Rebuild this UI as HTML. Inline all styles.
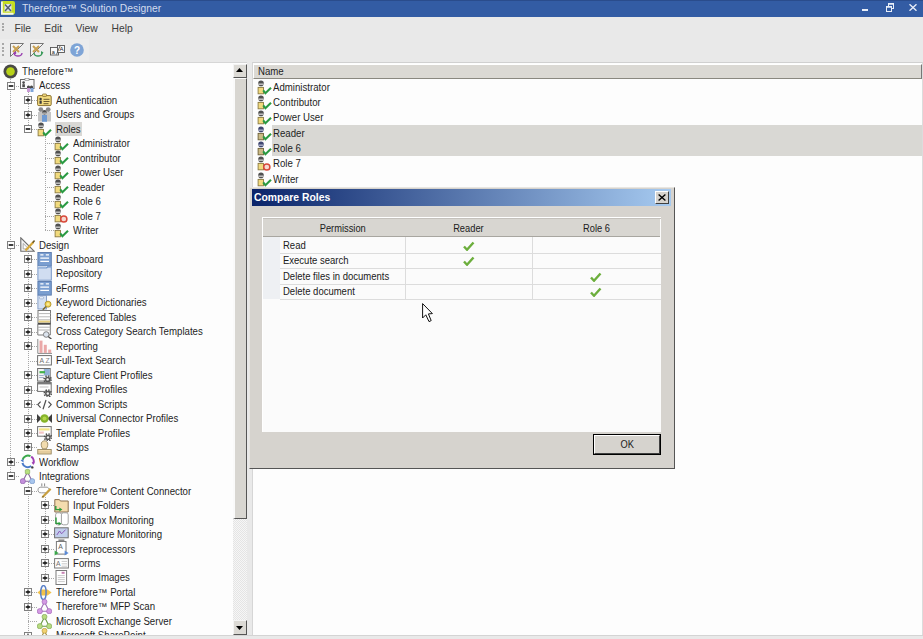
<!DOCTYPE html><html><head><meta charset="utf-8"><style>
*{margin:0;padding:0;box-sizing:border-box}
html,body{width:923px;height:639px;overflow:hidden;background:#e9e9e9;font-family:"Liberation Sans", sans-serif;color:#1e1e1e;position:relative}
.a{position:absolute}
#title{left:0;top:0;width:923px;height:17px;background:#335ca4;border-top:1px solid #2a4c8c}
#title .t{left:22px;top:1.5px;font-size:10.3px;line-height:12px;color:#d4ddef;white-space:nowrap}
#menu{left:0;top:17px;width:923px;height:20px;background:#e9e9e9}
#menu span{position:absolute;top:5.5px;font-size:10.3px;line-height:12px;color:#3c3c3c}
.grip{position:absolute;left:2px;width:2px;height:2px;background:#a8a8a8}
#tree{left:0;top:62px;width:247px;height:573px;background:#fdfdfd;overflow:hidden;border-top:1px solid #d6d6d6}
#treein{position:absolute;left:0;top:-63px;width:233px;height:700px;overflow:hidden}
.tx{position:absolute;height:14px;font-size:10px;white-space:nowrap;color:#1e1e1e;line-height:14px;transform:scaleX(0.965);transform-origin:0 50%}
.hsel{position:absolute;background:#d9d8d5}
.vl{position:absolute;width:1px;background:repeating-linear-gradient(to bottom,#a8a8a8 0 1px,transparent 1px 2px)}
.hl{position:absolute;height:1px;background:repeating-linear-gradient(to right,#a8a8a8 0 1px,transparent 1px 2px)}
.exp{position:absolute;width:8px;height:8px;border:1px solid #808080;background:#fdfdfd}
.exp .mh{position:absolute;left:1px;top:2px;width:4px;height:2px;background:#4a4a4a}
.exp .mv{position:absolute;left:2px;top:1px;width:2px;height:4px;background:#4a4a4a}
#vs{left:233px;top:64px;width:14px;height:571px;background:#e4e3df}
#list{left:252px;top:62px;width:671px;height:573px;background:#fdfdfd;border-top:1px solid #d0d0d0;border-left:1px solid #d6d6d6;border-right:1px solid #dcdcdc}
#lhdr{left:253px;top:64px;width:669px;height:15px;background:#dbd9d4;border-bottom:1px solid #8a8880;border-right:1px solid #777;border-top:1px solid #fff;border-left:1px solid #fff}
.dx{position:absolute;font-size:10px;line-height:12px;white-space:nowrap;color:#202020;transform:scaleX(0.95);transform-origin:0 50%}
.dc{position:absolute;font-size:10px;line-height:12px;white-space:nowrap;color:#202020;text-align:center}
.dc span{display:inline-block;transform:scaleX(0.93)}
.lsel{position:absolute;left:272px;width:650px;background:#d9d8d4}
#dlg{left:249px;top:187px;width:426px;height:282px;background:#d6d3ce;border-top:1px solid #e8e6e2;border-left:1px solid #e8e6e2;border-right:1px solid #555;border-bottom:1px solid #555}
</style></head><body>
<div id="title" class="a"><div class="t a">Therefore™ Solution Designer</div></div>
<svg class="a" style="left:1px;top:1px" width="14" height="14" viewBox="0 0 14 14"><rect x="0" y="0" width="14" height="13.5" rx="2" fill="#c6de22"/><path d="M0.8 0.5 V12.8 H12.5" fill="none" stroke="#f6f8e8" stroke-width="2"/><rect x="3.5" y="3" width="7" height="7.5" fill="#dfe6f0"/><path d="M4 3.5 L10 10 M10 3.5 L4 10" stroke="#556070" stroke-width="1.5"/></svg>
<div class="a" style="left:862px;top:9px;width:6px;height:2px;background:#e8eef8"></div>
<svg class="a" style="left:886px;top:3px" width="8" height="9" viewBox="0 0 8 9"><rect x="2.5" y="0.5" width="5" height="5" fill="none" stroke="#e8eef8" stroke-width="1"/><rect x="0.5" y="3.5" width="5" height="5" fill="#335ca4" stroke="#e8eef8" stroke-width="1"/><path d="M0.5 4h5M2.5 1h5" stroke="#e8eef8" stroke-width="1.4"/></svg>
<svg class="a" style="left:909px;top:4px" width="8" height="7" viewBox="0 0 8 7"><path d="M0.5 0.3 L7.5 6.7 M7.5 0.3 L0.5 6.7" stroke="#e8eef8" stroke-width="1.4"/></svg>
<div class="a" style="left:0;top:17px;width:923px;height:1px;background:#f2f5fa"></div>
<div id="menu" class="a"><span style="left:14.5px">File</span><span style="left:44.3px">Edit</span><span style="left:75.5px">View</span><span style="left:111.5px">Help</span></div>
<div class="grip" style="top:22.5px"></div>
<div class="grip" style="top:25.5px"></div>
<div class="grip" style="top:28.5px"></div>
<div class="a" style="left:0;top:39px;width:89px;height:22px;background:#ececec"></div>
<div class="grip" style="top:43px"></div>
<div class="grip" style="top:46.5px"></div>
<div class="grip" style="top:50px"></div>
<div class="grip" style="top:53.5px"></div>
<svg class="a" style="left:10px;top:43px" width="14" height="14" viewBox="0 0 14 14"><path d="M0.5 0.5 H13.5 L0.5 13.5 Z" fill="#f4f4f4" stroke="#777" stroke-width="1"/><path d="M3 3 L9 9 M9 3 L3 9" stroke="#c8a050" stroke-width="2"/><path d="M4 10 A4 3 0 0 0 12 10" fill="none" stroke="#9a40b0" stroke-width="1.4"/><circle cx="5" cy="10" r="1.3" fill="#9a40b0"/></svg>
<svg class="a" style="left:30px;top:43px" width="14" height="14" viewBox="0 0 14 14"><path d="M0.5 0.5 H13.5 L0.5 13.5 Z" fill="#f4f4f4" stroke="#777" stroke-width="1"/><path d="M3 3 L9 9 M9 3 L3 9" stroke="#c8a050" stroke-width="2"/><path d="M4 10 A4 3 0 0 0 12 10" fill="none" stroke="#3a9a5a" stroke-width="1.4"/><path d="M11 8 L13.5 9.5 L11 12 Z" fill="#3a9a5a"/></svg>
<svg class="a" style="left:50px;top:45px" width="15" height="11" viewBox="0 0 15 11"><rect x="0.5" y="2.5" width="8" height="7.5" fill="#fafafa" stroke="#555" stroke-width="0.9"/><rect x="7.5" y="0.5" width="7" height="7" fill="#fafafa" stroke="#555" stroke-width="0.9"/><path d="M6.5 9.5 L10 1" stroke="#555" stroke-width="0.9"/><text x="1.8" y="8.8" font-size="5.5" fill="#222" font-family="Liberation Sans">a</text><text x="9.6" y="6.4" font-size="6" fill="#222" font-family="Liberation Sans">A</text></svg>
<svg class="a" style="left:70px;top:43px" width="14" height="14" viewBox="0 0 14 14"><circle cx="7" cy="7" r="6.8" fill="#7ea4d6"/><text x="7" y="11" text-anchor="middle" font-size="10" font-weight="bold" fill="#fff" font-family="Liberation Sans">?</text></svg>
<div id="tree" class="a"><div id="treein"><div class="vl" style="left:10px;top:77px;height:9px"></div>
<div class="hl" style="left:10px;top:86px;width:10px"></div>
<div class="vl" style="left:28px;top:92px;height:8px"></div>
<div class="hl" style="left:28px;top:100px;width:9px"></div>
<div class="vl" style="left:28px;top:92px;height:23px"></div>
<div class="hl" style="left:28px;top:115px;width:9px"></div>
<div class="vl" style="left:28px;top:92px;height:37px"></div>
<div class="hl" style="left:28px;top:129px;width:9px"></div>
<div class="vl" style="left:45px;top:135px;height:8px"></div>
<div class="hl" style="left:45px;top:143px;width:9px"></div>
<div class="vl" style="left:45px;top:135px;height:23px"></div>
<div class="hl" style="left:45px;top:158px;width:9px"></div>
<div class="vl" style="left:45px;top:135px;height:37px"></div>
<div class="hl" style="left:45px;top:172px;width:9px"></div>
<div class="vl" style="left:45px;top:135px;height:52px"></div>
<div class="hl" style="left:45px;top:187px;width:9px"></div>
<div class="vl" style="left:45px;top:135px;height:66px"></div>
<div class="hl" style="left:45px;top:201px;width:9px"></div>
<div class="vl" style="left:45px;top:135px;height:81px"></div>
<div class="hl" style="left:45px;top:216px;width:9px"></div>
<div class="vl" style="left:45px;top:135px;height:95px"></div>
<div class="hl" style="left:45px;top:230px;width:9px"></div>
<div class="vl" style="left:10px;top:77px;height:168px"></div>
<div class="hl" style="left:10px;top:245px;width:10px"></div>
<div class="vl" style="left:28px;top:251px;height:8px"></div>
<div class="hl" style="left:28px;top:259px;width:9px"></div>
<div class="vl" style="left:28px;top:251px;height:23px"></div>
<div class="hl" style="left:28px;top:274px;width:9px"></div>
<div class="vl" style="left:28px;top:251px;height:37px"></div>
<div class="hl" style="left:28px;top:288px;width:9px"></div>
<div class="vl" style="left:28px;top:251px;height:52px"></div>
<div class="hl" style="left:28px;top:303px;width:9px"></div>
<div class="vl" style="left:28px;top:251px;height:66px"></div>
<div class="hl" style="left:28px;top:317px;width:9px"></div>
<div class="vl" style="left:28px;top:251px;height:81px"></div>
<div class="hl" style="left:28px;top:332px;width:9px"></div>
<div class="vl" style="left:28px;top:251px;height:95px"></div>
<div class="hl" style="left:28px;top:346px;width:9px"></div>
<div class="vl" style="left:28px;top:251px;height:110px"></div>
<div class="hl" style="left:28px;top:361px;width:9px"></div>
<div class="vl" style="left:28px;top:251px;height:124px"></div>
<div class="hl" style="left:28px;top:375px;width:9px"></div>
<div class="vl" style="left:28px;top:251px;height:139px"></div>
<div class="hl" style="left:28px;top:390px;width:9px"></div>
<div class="vl" style="left:28px;top:251px;height:153px"></div>
<div class="hl" style="left:28px;top:404px;width:9px"></div>
<div class="vl" style="left:28px;top:251px;height:168px"></div>
<div class="hl" style="left:28px;top:419px;width:9px"></div>
<div class="vl" style="left:28px;top:251px;height:182px"></div>
<div class="hl" style="left:28px;top:433px;width:9px"></div>
<div class="vl" style="left:28px;top:251px;height:196px"></div>
<div class="hl" style="left:28px;top:447px;width:9px"></div>
<div class="vl" style="left:10px;top:77px;height:385px"></div>
<div class="hl" style="left:10px;top:462px;width:10px"></div>
<div class="vl" style="left:10px;top:77px;height:399px"></div>
<div class="hl" style="left:10px;top:476px;width:10px"></div>
<div class="vl" style="left:28px;top:482px;height:9px"></div>
<div class="hl" style="left:28px;top:491px;width:9px"></div>
<div class="vl" style="left:45px;top:497px;height:8px"></div>
<div class="hl" style="left:45px;top:505px;width:9px"></div>
<div class="vl" style="left:45px;top:497px;height:23px"></div>
<div class="hl" style="left:45px;top:520px;width:9px"></div>
<div class="vl" style="left:45px;top:497px;height:37px"></div>
<div class="hl" style="left:45px;top:534px;width:9px"></div>
<div class="vl" style="left:45px;top:497px;height:52px"></div>
<div class="hl" style="left:45px;top:549px;width:9px"></div>
<div class="vl" style="left:45px;top:497px;height:66px"></div>
<div class="hl" style="left:45px;top:563px;width:9px"></div>
<div class="vl" style="left:45px;top:497px;height:81px"></div>
<div class="hl" style="left:45px;top:578px;width:9px"></div>
<div class="vl" style="left:28px;top:482px;height:110px"></div>
<div class="hl" style="left:28px;top:592px;width:9px"></div>
<div class="vl" style="left:28px;top:482px;height:125px"></div>
<div class="hl" style="left:28px;top:607px;width:9px"></div>
<div class="vl" style="left:28px;top:482px;height:139px"></div>
<div class="hl" style="left:28px;top:621px;width:9px"></div>
<div class="vl" style="left:28px;top:482px;height:154px"></div>
<div class="hl" style="left:28px;top:636px;width:9px"></div>
<svg class="a" style="left:3px;top:63.6px" width="15" height="15" viewBox="0 0 15 15"><circle cx="7.5" cy="7.5" r="7" fill="#4a4a46"/><circle cx="7.5" cy="7.5" r="4.3" fill="#b8d218"/></svg>
<div class="tx" style="left:22px;top:64.80px">Therefore™</div>
<div class="exp" style="left:7px;top:82px"><svg style="position:absolute;left:0;top:0" width="6" height="6" viewBox="0 0 6 6"><rect x="0.7" y="2.2" width="4.6" height="1.6" fill="#111"/></svg></div>
<svg class="a" style="left:20px;top:78.08px" width="15" height="15" viewBox="0 0 15 15"><rect x="0.5" y="1.5" width="13.5" height="9" fill="#fafafa" stroke="#6a6a6a" stroke-width="1"/><rect x="5" y="0.3" width="4" height="2" fill="#fff" stroke="#888" stroke-width="0.7"/><circle cx="3.6" cy="4.6" r="1.3" fill="#4a4a4a"/><rect x="2.3" y="6.2" width="2.6" height="3" fill="#4a4a4a"/><path d="M7 8.5 q1.5 -2 3 0 q1.5 -2 3 0 v1.5 h-6z" fill="#4a4a4a"/><rect x="7" y="10" width="3" height="4" fill="#c89ad4"/><rect x="10.5" y="10" width="3" height="4" fill="#7fa6da"/></svg>
<div class="tx" style="left:39px;top:79.28px">Access</div>
<div class="exp" style="left:24px;top:96px"><svg style="position:absolute;left:0;top:0" width="6" height="6" viewBox="0 0 6 6"><rect x="2.25" y="0.6" width="1.5" height="4.8" fill="#555"/><rect x="0.7" y="2.2" width="4.6" height="1.6" fill="#111"/></svg></div>
<svg class="a" style="left:37px;top:92.55px" width="15" height="15" viewBox="0 0 15 15"><rect x="0.6" y="2.6" width="13.6" height="10" rx="1.2" fill="#f4dc80" stroke="#8a7030" stroke-width="1"/><rect x="5.5" y="1" width="4" height="2.4" rx="0.6" fill="#f4dc80" stroke="#8a7030" stroke-width="0.8"/><circle cx="3.6" cy="6" r="1.2" fill="#3a3a3a"/><rect x="2.5" y="7.6" width="2.2" height="3.2" fill="#3a3a3a"/><path d="M6.5 6.3h6M6.5 8.5h6M6.5 10.7h5" stroke="#6a5a30" stroke-width="1"/></svg>
<div class="tx" style="left:56px;top:93.75px">Authentication</div>
<div class="exp" style="left:24px;top:111px"><svg style="position:absolute;left:0;top:0" width="6" height="6" viewBox="0 0 6 6"><rect x="2.25" y="0.6" width="1.5" height="4.8" fill="#555"/><rect x="0.7" y="2.2" width="4.6" height="1.6" fill="#111"/></svg></div>
<svg class="a" style="left:37px;top:107.03px" width="15" height="15" viewBox="0 0 15 15"><circle cx="3.8" cy="2.6" r="2.4" fill="#8a8a8a"/><circle cx="11.2" cy="2.6" r="2.4" fill="#8a8a8a"/><rect x="1" y="5" width="5.5" height="9.5" fill="#c4c4c4"/><rect x="8.5" y="5" width="5.5" height="9.5" fill="#c4c4c4"/><circle cx="7.5" cy="5.3" r="2.4" fill="#4e4e4e"/><rect x="5.3" y="5.6" width="4.4" height="1" fill="#ddd"/><rect x="5" y="8" width="5" height="6.8" fill="#6e9ad2"/></svg>
<div class="tx" style="left:56px;top:108.23px">Users and Groups</div>
<div class="exp" style="left:24px;top:125px"><svg style="position:absolute;left:0;top:0" width="6" height="6" viewBox="0 0 6 6"><rect x="0.7" y="2.2" width="4.6" height="1.6" fill="#111"/></svg></div>
<svg class="a" style="left:37px;top:121.5px" width="15" height="15" viewBox="0 0 15 15"><circle cx="4" cy="3.4" r="2.8" fill="#505050"/><rect x="1.3" y="3.6" width="5.4" height="1.1" fill="#e8e8e8"/><rect x="1.1" y="7.4" width="5.4" height="6.4" fill="#f2da7e" stroke="#8a7a40" stroke-width="0.9"/><path d="M6.2 10.4 L8.4 13.2 L14 7.8" fill="none" stroke="#2a9a42" stroke-width="2.1"/></svg>
<div class="hsel" style="left:55px;top:122px;width:27px;height:14px"></div>
<div class="tx" style="left:56px;top:122.70px">Roles</div>
<svg class="a" style="left:54px;top:135.98px" width="15" height="15" viewBox="0 0 15 15"><circle cx="4" cy="3.4" r="2.8" fill="#505050"/><rect x="1.3" y="3.6" width="5.4" height="1.1" fill="#e8e8e8"/><rect x="1.1" y="7.4" width="5.4" height="6.4" fill="#f2da7e" stroke="#8a7a40" stroke-width="0.9"/><path d="M6.2 10.4 L8.4 13.2 L14 7.8" fill="none" stroke="#2a9a42" stroke-width="2.1"/></svg>
<div class="tx" style="left:73px;top:137.18px">Administrator</div>
<svg class="a" style="left:54px;top:150.46px" width="15" height="15" viewBox="0 0 15 15"><circle cx="4" cy="3.4" r="2.8" fill="#505050"/><rect x="1.3" y="3.6" width="5.4" height="1.1" fill="#e8e8e8"/><rect x="1.1" y="7.4" width="5.4" height="6.4" fill="#f2da7e" stroke="#8a7a40" stroke-width="0.9"/><path d="M6.2 10.4 L8.4 13.2 L14 7.8" fill="none" stroke="#2a9a42" stroke-width="2.1"/></svg>
<div class="tx" style="left:73px;top:151.66px">Contributor</div>
<svg class="a" style="left:54px;top:164.93px" width="15" height="15" viewBox="0 0 15 15"><circle cx="4" cy="3.4" r="2.8" fill="#505050"/><rect x="1.3" y="3.6" width="5.4" height="1.1" fill="#e8e8e8"/><rect x="1.1" y="7.4" width="5.4" height="6.4" fill="#f2da7e" stroke="#8a7a40" stroke-width="0.9"/><path d="M6.2 10.4 L8.4 13.2 L14 7.8" fill="none" stroke="#2a9a42" stroke-width="2.1"/></svg>
<div class="tx" style="left:73px;top:166.13px">Power User</div>
<svg class="a" style="left:54px;top:179.41px" width="15" height="15" viewBox="0 0 15 15"><circle cx="4" cy="3.4" r="2.8" fill="#505050"/><rect x="1.3" y="3.6" width="5.4" height="1.1" fill="#e8e8e8"/><rect x="1.1" y="7.4" width="5.4" height="6.4" fill="#f2da7e" stroke="#8a7a40" stroke-width="0.9"/><path d="M6.2 10.4 L8.4 13.2 L14 7.8" fill="none" stroke="#2a9a42" stroke-width="2.1"/></svg>
<div class="tx" style="left:73px;top:180.61px">Reader</div>
<svg class="a" style="left:54px;top:193.88px" width="15" height="15" viewBox="0 0 15 15"><circle cx="4" cy="3.4" r="2.8" fill="#505050"/><rect x="1.3" y="3.6" width="5.4" height="1.1" fill="#e8e8e8"/><rect x="1.1" y="7.4" width="5.4" height="6.4" fill="#f2da7e" stroke="#8a7a40" stroke-width="0.9"/><path d="M6.2 10.4 L8.4 13.2 L14 7.8" fill="none" stroke="#2a9a42" stroke-width="2.1"/></svg>
<div class="tx" style="left:73px;top:195.08px">Role 6</div>
<svg class="a" style="left:54px;top:208.36px" width="15" height="15" viewBox="0 0 15 15"><circle cx="4" cy="3.4" r="2.8" fill="#505050"/><rect x="1.3" y="3.6" width="5.4" height="1.1" fill="#e8e8e8"/><rect x="1.1" y="7.4" width="5.4" height="6.4" fill="#f2da7e" stroke="#8a7a40" stroke-width="0.9"/><circle cx="9.8" cy="11" r="3.1" fill="#f6d8d0" stroke="#d8483a" stroke-width="1.5"/></svg>
<div class="tx" style="left:73px;top:209.56px">Role 7</div>
<svg class="a" style="left:54px;top:222.84px" width="15" height="15" viewBox="0 0 15 15"><circle cx="4" cy="3.4" r="2.8" fill="#505050"/><rect x="1.3" y="3.6" width="5.4" height="1.1" fill="#e8e8e8"/><rect x="1.1" y="7.4" width="5.4" height="6.4" fill="#f2da7e" stroke="#8a7a40" stroke-width="0.9"/><path d="M6.2 10.4 L8.4 13.2 L14 7.8" fill="none" stroke="#2a9a42" stroke-width="2.1"/></svg>
<div class="tx" style="left:73px;top:224.04px">Writer</div>
<div class="exp" style="left:7px;top:241px"><svg style="position:absolute;left:0;top:0" width="6" height="6" viewBox="0 0 6 6"><rect x="0.7" y="2.2" width="4.6" height="1.6" fill="#111"/></svg></div>
<svg class="a" style="left:20px;top:237.31px" width="15" height="15" viewBox="0 0 15 15"><path d="M0.8 0.8 L0.8 14.3 L14.3 14.3 Z" fill="#f4f4f4" stroke="#6e6e6e" stroke-width="1.1"/><path d="M3.2 6.5 L3.2 11.9 L8.6 11.9 Z" fill="#fff" stroke="#999" stroke-width="0.8"/><path d="M5.5 13.5 L13.2 5.2" stroke="#d6a83a" stroke-width="2.2"/><path d="M12.6 5.8 L14.6 3.6" stroke="#6a5520" stroke-width="1.6"/></svg>
<div class="tx" style="left:39px;top:238.51px">Design</div>
<div class="exp" style="left:24px;top:255px"><svg style="position:absolute;left:0;top:0" width="6" height="6" viewBox="0 0 6 6"><rect x="2.25" y="0.6" width="1.5" height="4.8" fill="#555"/><rect x="0.7" y="2.2" width="4.6" height="1.6" fill="#111"/></svg></div>
<svg class="a" style="left:37px;top:251.79px" width="15" height="15" viewBox="0 0 15 15"><rect x="0.9" y="0.5" width="13.4" height="13.6" fill="#7a9ed0" stroke="#5878ac" stroke-width="0.9"/><path d="M3.3 2.9h3.2M8.8 2.9h3.2M3.3 6.2h8.7M3.3 9.4h8.7" stroke="#fff" stroke-width="1.3"/></svg>
<div class="tx" style="left:56px;top:252.99px">Dashboard</div>
<div class="exp" style="left:24px;top:270px"><svg style="position:absolute;left:0;top:0" width="6" height="6" viewBox="0 0 6 6"><rect x="2.25" y="0.6" width="1.5" height="4.8" fill="#555"/><rect x="0.7" y="2.2" width="4.6" height="1.6" fill="#111"/></svg></div>
<svg class="a" style="left:37px;top:266.26px" width="15" height="15" viewBox="0 0 15 15"><rect x="0.9" y="0.8" width="13.4" height="13.4" fill="#d0ddf1" stroke="#6e8fc2" stroke-width="0.9"/><path d="M0.9 1.6 H9.5 L10.8 0.4 H14.3" stroke="#7a9ed0" stroke-width="2" fill="none"/><path d="M0.9 0.8 H9 L10 0" stroke="#fff" stroke-width="0.8" fill="none"/></svg>
<div class="tx" style="left:56px;top:267.46px">Repository</div>
<div class="exp" style="left:24px;top:284px"><svg style="position:absolute;left:0;top:0" width="6" height="6" viewBox="0 0 6 6"><rect x="2.25" y="0.6" width="1.5" height="4.8" fill="#555"/><rect x="0.7" y="2.2" width="4.6" height="1.6" fill="#111"/></svg></div>
<svg class="a" style="left:37px;top:280.74px" width="15" height="15" viewBox="0 0 15 15"><rect x="0.9" y="0.5" width="13.4" height="13.6" fill="#7a9ed0" stroke="#5878ac" stroke-width="0.9"/><path d="M3.3 2.9h3.2M8.8 2.9h3.2M3.3 6.2h8.7M3.3 9.4h8.7" stroke="#fff" stroke-width="1.3"/></svg>
<div class="tx" style="left:56px;top:281.94px">eForms</div>
<div class="exp" style="left:24px;top:299px"><svg style="position:absolute;left:0;top:0" width="6" height="6" viewBox="0 0 6 6"><rect x="2.25" y="0.6" width="1.5" height="4.8" fill="#555"/><rect x="0.7" y="2.2" width="4.6" height="1.6" fill="#111"/></svg></div>
<svg class="a" style="left:37px;top:295.22px" width="15" height="15" viewBox="0 0 15 15"><rect x="0.9" y="0.5" width="8.6" height="13.5" fill="#d4e0f2" stroke="#7e98c4" stroke-width="0.9"/><rect x="2.5" y="1.8" width="4" height="2" rx="0.6" fill="#fff" stroke="#7e98c4" stroke-width="0.6"/><circle cx="11" cy="9.2" r="3" fill="#f2d458" stroke="#a88a20" stroke-width="0.8"/><circle cx="11" cy="9.2" r="1.2" fill="#f8ea9a"/><path d="M9 11.4 L5.8 14.8" stroke="#7a6828" stroke-width="1.4"/></svg>
<div class="tx" style="left:56px;top:296.42px">Keyword Dictionaries</div>
<div class="exp" style="left:24px;top:313px"><svg style="position:absolute;left:0;top:0" width="6" height="6" viewBox="0 0 6 6"><rect x="2.25" y="0.6" width="1.5" height="4.8" fill="#555"/><rect x="0.7" y="2.2" width="4.6" height="1.6" fill="#111"/></svg></div>
<svg class="a" style="left:37px;top:309.69px" width="15" height="15" viewBox="0 0 15 15"><rect x="1" y="0.5" width="12.5" height="14.3" fill="#fff" stroke="#7a7a7a" stroke-width="1"/><path d="M1 3.6h12.5M1 6.8h12.5M1 9.8h12.5" stroke="#b8b8b8" stroke-width="1"/><rect x="1.5" y="10.6" width="11.5" height="2" fill="#e8d080"/><rect x="1" y="12.8" width="12.5" height="2" fill="#484848"/></svg>
<div class="tx" style="left:56px;top:310.89px">Referenced Tables</div>
<div class="exp" style="left:24px;top:328px"><svg style="position:absolute;left:0;top:0" width="6" height="6" viewBox="0 0 6 6"><rect x="2.25" y="0.6" width="1.5" height="4.8" fill="#555"/><rect x="0.7" y="2.2" width="4.6" height="1.6" fill="#111"/></svg></div>
<svg class="a" style="left:37px;top:324.17px" width="15" height="15" viewBox="0 0 15 15"><path d="M0.8 0.5h12.5v10.5h-12.5z" fill="#fff" stroke="#7a7a7a" stroke-width="1"/><path d="M0.8 3.2h12.5M0.8 6h12.5" stroke="#b0b0b0"/><circle cx="9.2" cy="10.5" r="2.8" fill="#dce4ee" stroke="#777" stroke-width="0.9"/><path d="M11.2 12.5 L14.4 15" stroke="#505050" stroke-width="1.4"/></svg>
<div class="tx" style="left:56px;top:325.37px">Cross Category Search Templates</div>
<div class="exp" style="left:24px;top:342px"><svg style="position:absolute;left:0;top:0" width="6" height="6" viewBox="0 0 6 6"><rect x="2.25" y="0.6" width="1.5" height="4.8" fill="#555"/><rect x="0.7" y="2.2" width="4.6" height="1.6" fill="#111"/></svg></div>
<svg class="a" style="left:37px;top:338.64px" width="15" height="15" viewBox="0 0 15 15"><path d="M0.8 0 V14.4 H15" fill="none" stroke="#8a8a8a" stroke-width="1"/><rect x="2.5" y="1.6" width="3" height="12.3" fill="#eaa8a8"/><rect x="6.8" y="5.8" width="3" height="8.1" fill="#eaa8a8"/><rect x="11.2" y="10.6" width="3" height="3.3" fill="#eaa8a8"/></svg>
<div class="tx" style="left:56px;top:339.84px">Reporting</div>
<svg class="a" style="left:37px;top:353.12px" width="15" height="15" viewBox="0 0 15 15"><rect x="0.6" y="2.6" width="13.8" height="9.4" fill="#fff" stroke="#6e6e6e" stroke-width="1"/><text x="2.4" y="10" font-size="6.8" fill="#707070" font-family="Liberation Sans">A</text><text x="8.6" y="10.3" font-size="6.8" fill="#888" font-family="Liberation Sans">Z</text></svg>
<div class="tx" style="left:56px;top:354.32px">Full-Text Search</div>
<div class="exp" style="left:24px;top:371px"><svg style="position:absolute;left:0;top:0" width="6" height="6" viewBox="0 0 6 6"><rect x="2.25" y="0.6" width="1.5" height="4.8" fill="#555"/><rect x="0.7" y="2.2" width="4.6" height="1.6" fill="#111"/></svg></div>
<svg class="a" style="left:37px;top:367.6px" width="15" height="15" viewBox="0 0 15 15"><rect x="0.6" y="0.5" width="12.6" height="12.6" fill="#f4f4f4" stroke="#6e6e6e" stroke-width="1"/><rect x="6.8" y="1" width="6" height="6.5" fill="#8eb0d6"/><path d="M2.5 4.2 h5.5" stroke="#42b04a" stroke-width="2.2"/><path d="M2.2 7.5h4.5M2.2 9.5h4.5" stroke="#8a9ac0" stroke-width="0.8"/><circle cx="10.6" cy="11.4" r="3.5" fill="none" stroke="#505050" stroke-width="1.6" stroke-dasharray="1.4 1.35"/><circle cx="10.6" cy="11.4" r="2.7" fill="#555"/><circle cx="10.6" cy="11.4" r="1.2" fill="#f2f2f2"/></svg>
<div class="tx" style="left:56px;top:368.80px">Capture Client Profiles</div>
<div class="exp" style="left:24px;top:386px"><svg style="position:absolute;left:0;top:0" width="6" height="6" viewBox="0 0 6 6"><rect x="2.25" y="0.6" width="1.5" height="4.8" fill="#555"/><rect x="0.7" y="2.2" width="4.6" height="1.6" fill="#111"/></svg></div>
<svg class="a" style="left:37px;top:382.07px" width="15" height="15" viewBox="0 0 15 15"><rect x="0.6" y="0.6" width="13.6" height="8.8" fill="#fff" stroke="#6e6e6e" stroke-width="1"/><rect x="0.6" y="0.6" width="13.6" height="1.8" fill="#7a7a7a"/><path d="M2.5 5h9" stroke="#ccc" stroke-width="1.2"/><circle cx="10.8" cy="11.5" r="3.5" fill="none" stroke="#505050" stroke-width="1.6" stroke-dasharray="1.4 1.35"/><circle cx="10.8" cy="11.5" r="2.7" fill="#555"/><circle cx="10.8" cy="11.5" r="1.2" fill="#f2f2f2"/></svg>
<div class="tx" style="left:56px;top:383.27px">Indexing Profiles</div>
<div class="exp" style="left:24px;top:400px"><svg style="position:absolute;left:0;top:0" width="6" height="6" viewBox="0 0 6 6"><rect x="2.25" y="0.6" width="1.5" height="4.8" fill="#555"/><rect x="0.7" y="2.2" width="4.6" height="1.6" fill="#111"/></svg></div>
<svg class="a" style="left:37px;top:396.55px" width="15" height="15" viewBox="0 0 15 15"><path d="M3.6 4.6 L0.8 7.6 L3.6 10.6 M11.4 4.6 L14.2 7.6 L11.4 10.6 M9 3 L6 12.2" fill="none" stroke="#4e4e4e" stroke-width="1.2"/></svg>
<div class="tx" style="left:56px;top:397.75px">Common Scripts</div>
<div class="exp" style="left:24px;top:415px"><svg style="position:absolute;left:0;top:0" width="6" height="6" viewBox="0 0 6 6"><rect x="2.25" y="0.6" width="1.5" height="4.8" fill="#555"/><rect x="0.7" y="2.2" width="4.6" height="1.6" fill="#111"/></svg></div>
<svg class="a" style="left:37px;top:411.02px" width="15" height="15" viewBox="0 0 15 15"><path d="M0 3 L4.5 7.5 L0 12 Z M15 3 L10.5 7.5 L15 12 Z" fill="#3e3e3e"/><circle cx="7.5" cy="7.5" r="4.2" fill="#86b42a"/><circle cx="7.5" cy="7.5" r="2" fill="#b4d84a"/></svg>
<div class="tx" style="left:56px;top:412.22px">Universal Connector Profiles</div>
<div class="exp" style="left:24px;top:429px"><svg style="position:absolute;left:0;top:0" width="6" height="6" viewBox="0 0 6 6"><rect x="2.25" y="0.6" width="1.5" height="4.8" fill="#555"/><rect x="0.7" y="2.2" width="4.6" height="1.6" fill="#111"/></svg></div>
<svg class="a" style="left:37px;top:425.5px" width="15" height="15" viewBox="0 0 15 15"><rect x="0.6" y="0.6" width="13.6" height="9.6" fill="#fff" stroke="#6e6e6e" stroke-width="1"/><rect x="2" y="2.3" width="10.6" height="2.2" fill="#f2e488"/><rect x="2" y="5.5" width="4.8" height="2.2" fill="#f4c6c6"/><circle cx="11" cy="11.4" r="3.5" fill="none" stroke="#505050" stroke-width="1.6" stroke-dasharray="1.4 1.35"/><circle cx="11" cy="11.4" r="2.7" fill="#555"/><circle cx="11" cy="11.4" r="1.2" fill="#f2f2f2"/></svg>
<div class="tx" style="left:56px;top:426.70px">Template Profiles</div>
<div class="exp" style="left:24px;top:443px"><svg style="position:absolute;left:0;top:0" width="6" height="6" viewBox="0 0 6 6"><rect x="2.25" y="0.6" width="1.5" height="4.8" fill="#555"/><rect x="0.7" y="2.2" width="4.6" height="1.6" fill="#111"/></svg></div>
<svg class="a" style="left:37px;top:439.98px" width="15" height="15" viewBox="0 0 15 15"><path d="M5.6 8.8 C2.8 4 4.6 0.8 7.5 0.8 C10.4 0.8 12.2 4 9.4 8.8 Z" fill="#f2dcae" stroke="#8a7a50" stroke-width="0.8"/><rect x="0.8" y="9.4" width="13.4" height="4.6" fill="#f2dcae" stroke="#8a7a50" stroke-width="0.8"/><path d="M0.8 12h13.4" stroke="#c8b080" stroke-width="0.7"/></svg>
<div class="tx" style="left:56px;top:441.18px">Stamps</div>
<div class="exp" style="left:7px;top:458px"><svg style="position:absolute;left:0;top:0" width="6" height="6" viewBox="0 0 6 6"><rect x="2.25" y="0.6" width="1.5" height="4.8" fill="#555"/><rect x="0.7" y="2.2" width="4.6" height="1.6" fill="#111"/></svg></div>
<svg class="a" style="left:20px;top:454.45px" width="15" height="15" viewBox="0 0 15 15"><path d="M2.6 5.8 A5.5 5.5 0 0 1 10.5 2.2" fill="none" stroke="#3aa84a" stroke-width="2"/><path d="M11.2 2.6 A5.5 5.5 0 0 1 13.2 9.5" fill="none" stroke="#a040b4" stroke-width="2"/><path d="M11.6 8.6 L14.8 7.6 L13.4 11 Z" fill="#a040b4"/><path d="M11.2 12 A5.5 5.5 0 0 1 2.4 9" fill="none" stroke="#4a7ac8" stroke-width="2"/><path d="M0.6 6.6 L3.4 5 L3.6 8.6 Z" fill="#4a7ac8"/><circle cx="12.3" cy="13.4" r="1.2" fill="#3e3e3e"/></svg>
<div class="tx" style="left:39px;top:455.65px">Workflow</div>
<div class="exp" style="left:7px;top:472px"><svg style="position:absolute;left:0;top:0" width="6" height="6" viewBox="0 0 6 6"><rect x="0.7" y="2.2" width="4.6" height="1.6" fill="#111"/></svg></div>
<svg class="a" style="left:20px;top:468.93px" width="15" height="15" viewBox="0 0 15 15"><path d="M7.5 3 L2.8 12.2 M7.5 3 L12.2 12.2 M2.8 12.2 H12.2" stroke="#8a6aa0" stroke-width="1.1" fill="none"/><rect x="5.3" y="0.6" width="4.4" height="4.4" rx="1" fill="#b8e080" stroke="#78a050" stroke-width="0.6"/><circle cx="2.8" cy="12.2" r="2.6" fill="#c490dc" stroke="#8a5aa4" stroke-width="0.6"/><circle cx="12.2" cy="12.2" r="2.6" fill="#a8c6ee" stroke="#7090c4" stroke-width="0.6"/></svg>
<div class="tx" style="left:39px;top:470.13px">Integrations</div>
<div class="exp" style="left:24px;top:487px"><svg style="position:absolute;left:0;top:0" width="6" height="6" viewBox="0 0 6 6"><rect x="0.7" y="2.2" width="4.6" height="1.6" fill="#111"/></svg></div>
<svg class="a" style="left:37px;top:483.4px" width="15" height="15" viewBox="0 0 15 15"><path d="M4.8 0.4v3M7.6 0.4v3" stroke="#8a8a8a" stroke-width="1"/><path d="M3 4.2 h7.5 l2.6 2.8 l-2.6 2.8 h-6 a2.9 2.9 0 0 1 -1.5 -5.6z" fill="#fff" stroke="#9a9a9a" stroke-width="1"/><path d="M5.5 14.2 L13.6 5.8" stroke="#c8a040" stroke-width="2.2"/><path d="M5.2 14.6 L6.4 13" stroke="#6a5520" stroke-width="1"/></svg>
<div class="tx" style="left:56px;top:484.60px">Therefore™ Content Connector</div>
<div class="exp" style="left:41px;top:501px"><svg style="position:absolute;left:0;top:0" width="6" height="6" viewBox="0 0 6 6"><rect x="2.25" y="0.6" width="1.5" height="4.8" fill="#555"/><rect x="0.7" y="2.2" width="4.6" height="1.6" fill="#111"/></svg></div>
<svg class="a" style="left:54px;top:497.88px" width="15" height="15" viewBox="0 0 15 15"><path d="M0.8 1.6 h4.6 l1 1.4 h7.8 v11 h-13.4z" fill="#f4dcae" stroke="#8a7050" stroke-width="1"/><path d="M1.8 8 v3.6 h4.2" fill="none" stroke="#2a9a3a" stroke-width="1.4"/><path d="M5.4 9.6 l3 2 l-3 2z" fill="#2a9a3a"/></svg>
<div class="tx" style="left:73px;top:499.08px">Input Folders</div>
<div class="exp" style="left:41px;top:516px"><svg style="position:absolute;left:0;top:0" width="6" height="6" viewBox="0 0 6 6"><rect x="2.25" y="0.6" width="1.5" height="4.8" fill="#555"/><rect x="0.7" y="2.2" width="4.6" height="1.6" fill="#111"/></svg></div>
<svg class="a" style="left:54px;top:512.36px" width="15" height="15" viewBox="0 0 15 15"><rect x="1.6" y="0.8" width="6" height="12" rx="2" fill="#fff" stroke="#9a9a9a" stroke-width="0.9"/><rect x="7.4" y="0.8" width="6.8" height="12" rx="2" fill="#fff" stroke="#9a9a9a" stroke-width="0.9"/><path d="M2 5.6 v5.8 h3" fill="none" stroke="#2a9a3a" stroke-width="1.4"/><path d="M4.6 9.8 l2.6 1.6 l-2.6 2z" fill="#2a9a3a"/></svg>
<div class="tx" style="left:73px;top:513.56px">Mailbox Monitoring</div>
<div class="exp" style="left:41px;top:530px"><svg style="position:absolute;left:0;top:0" width="6" height="6" viewBox="0 0 6 6"><rect x="2.25" y="0.6" width="1.5" height="4.8" fill="#555"/><rect x="0.7" y="2.2" width="4.6" height="1.6" fill="#111"/></svg></div>
<svg class="a" style="left:54px;top:526.83px" width="15" height="15" viewBox="0 0 15 15"><rect x="0.6" y="0.8" width="13.6" height="10" fill="#c2cfec" stroke="#6e6e6e" stroke-width="1"/><path d="M2.8 8 L5.6 4 L7.6 6.8 L11.6 2.6" stroke="#8a5ab8" stroke-width="1" fill="none"/><path d="M4.4 13.2h6" stroke="#8a8a8a" stroke-width="1.6"/></svg>
<div class="tx" style="left:73px;top:528.03px">Signature Monitoring</div>
<div class="exp" style="left:41px;top:545px"><svg style="position:absolute;left:0;top:0" width="6" height="6" viewBox="0 0 6 6"><rect x="2.25" y="0.6" width="1.5" height="4.8" fill="#555"/><rect x="0.7" y="2.2" width="4.6" height="1.6" fill="#111"/></svg></div>
<svg class="a" style="left:54px;top:541.31px" width="15" height="15" viewBox="0 0 15 15"><rect x="2.4" y="0.5" width="9.6" height="12.6" fill="#fff" stroke="#7a7a7a" stroke-width="1"/><text x="4.2" y="7.6" font-size="6.8" fill="#606060" font-family="Liberation Sans">A</text><path d="M0.6 9.6 L4.6 12 L0.6 14.6 Z" fill="#3aa84a"/><path d="M10.6 9.6 L14.6 12 L10.6 14.6 Z" fill="#5a8ad8"/></svg>
<div class="tx" style="left:73px;top:542.51px">Preprocessors</div>
<div class="exp" style="left:41px;top:559px"><svg style="position:absolute;left:0;top:0" width="6" height="6" viewBox="0 0 6 6"><rect x="2.25" y="0.6" width="1.5" height="4.8" fill="#555"/><rect x="0.7" y="2.2" width="4.6" height="1.6" fill="#111"/></svg></div>
<svg class="a" style="left:54px;top:555.78px" width="15" height="15" viewBox="0 0 15 15"><rect x="0.6" y="2.6" width="13.8" height="9.4" fill="#fff" stroke="#7a7a7a" stroke-width="1"/><text x="2" y="10.4" font-size="6.8" fill="#707070" font-family="Liberation Sans">A</text><path d="M7.6 5.4h5.4M7.6 7.8h5.4M7.6 10.2h5.4" stroke="#bbb" stroke-width="0.8"/></svg>
<div class="tx" style="left:73px;top:556.98px">Forms</div>
<div class="exp" style="left:41px;top:574px"><svg style="position:absolute;left:0;top:0" width="6" height="6" viewBox="0 0 6 6"><rect x="2.25" y="0.6" width="1.5" height="4.8" fill="#555"/><rect x="0.7" y="2.2" width="4.6" height="1.6" fill="#111"/></svg></div>
<svg class="a" style="left:54px;top:570.26px" width="15" height="15" viewBox="0 0 15 15"><rect x="2" y="0.5" width="10.6" height="14" fill="#fff" stroke="#7a7a7a" stroke-width="1"/><rect x="7.6" y="1.8" width="3" height="2" fill="#c880b4"/><path d="M3.8 5.6h7M3.8 7.6h7M3.8 9.6h7M3.8 11.6h7" stroke="#bbb" stroke-width="0.8"/></svg>
<div class="tx" style="left:73px;top:571.46px">Form Images</div>
<div class="exp" style="left:24px;top:588px"><svg style="position:absolute;left:0;top:0" width="6" height="6" viewBox="0 0 6 6"><rect x="2.25" y="0.6" width="1.5" height="4.8" fill="#555"/><rect x="0.7" y="2.2" width="4.6" height="1.6" fill="#111"/></svg></div>
<svg class="a" style="left:37px;top:584.74px" width="15" height="15" viewBox="0 0 15 15"><path d="M0.4 7.5 L4 4.6 H10.5 L14.6 7.5 L10.5 10.4 H4 Z" fill="#f2c24a"/><ellipse cx="6.4" cy="7.5" rx="2.7" ry="6.9" fill="none" stroke="#5a80c8" stroke-width="1.5"/></svg>
<div class="tx" style="left:56px;top:585.94px">Therefore™ Portal</div>
<div class="exp" style="left:24px;top:603px"><svg style="position:absolute;left:0;top:0" width="6" height="6" viewBox="0 0 6 6"><rect x="2.25" y="0.6" width="1.5" height="4.8" fill="#555"/><rect x="0.7" y="2.2" width="4.6" height="1.6" fill="#111"/></svg></div>
<svg class="a" style="left:37px;top:599.21px" width="15" height="15" viewBox="0 0 15 15"><path d="M7.5 3 L2.8 12.2 M7.5 3 L12.2 12.2 M2.8 12.2 H12.2" stroke="#a070b8" stroke-width="1.1" fill="none"/><circle cx="7.5" cy="2.8" r="2.5" fill="#d49ae4" stroke="#9a60b0" stroke-width="0.6"/><circle cx="2.8" cy="12.2" r="2.6" fill="#d49ae4" stroke="#9a60b0" stroke-width="0.6"/><circle cx="12.2" cy="12.2" r="2.6" fill="#d49ae4" stroke="#9a60b0" stroke-width="0.6"/></svg>
<div class="tx" style="left:56px;top:600.41px">Therefore™ MFP Scan</div>
<svg class="a" style="left:37px;top:613.69px" width="15" height="15" viewBox="0 0 15 15"><path d="M7.5 3 L2.8 12.2 M7.5 3 L12.2 12.2 M2.8 12.2 H12.2" stroke="#6a9a40" stroke-width="1.1" fill="none"/><circle cx="7.5" cy="2.8" r="2.5" fill="#b8dc80" stroke="#78a050" stroke-width="0.6"/><circle cx="2.8" cy="12.2" r="2.6" fill="#b8dc80" stroke="#78a050" stroke-width="0.6"/><circle cx="12.2" cy="12.2" r="2.6" fill="#b8dc80" stroke="#78a050" stroke-width="0.6"/></svg>
<div class="tx" style="left:56px;top:614.89px">Microsoft Exchange Server</div>
<div class="exp" style="left:24px;top:632px"><svg style="position:absolute;left:0;top:0" width="6" height="6" viewBox="0 0 6 6"><rect x="2.25" y="0.6" width="1.5" height="4.8" fill="#555"/><rect x="0.7" y="2.2" width="4.6" height="1.6" fill="#111"/></svg></div>
<svg class="a" style="left:37px;top:628.16px" width="15" height="15" viewBox="0 0 15 15"><path d="M7.5 3 L2.8 12.2 M7.5 3 L12.2 12.2 M2.8 12.2 H12.2" stroke="#a09040" stroke-width="1.1" fill="none"/><circle cx="7.5" cy="2.8" r="2.5" fill="#f2d270" stroke="#b09030" stroke-width="0.6"/><circle cx="2.8" cy="12.2" r="2.6" fill="#f2d270" stroke="#b09030" stroke-width="0.6"/><circle cx="12.2" cy="12.2" r="2.6" fill="#f2d270" stroke="#b09030" stroke-width="0.6"/></svg>
<div class="tx" style="left:56px;top:629.36px">Microsoft SharePoint</div></div></div>
<div id="vs" class="a"></div>
<div class="a" style="left:233px;top:64px;width:14px;height:14px;background:#dcdad5;border-top:1px solid #f4f4f4;border-left:1px solid #f4f4f4;border-right:1px solid #555;border-bottom:1px solid #555"></div>
<svg class="a" style="left:236px;top:68px" width="7" height="4" viewBox="0 0 7 4"><path d="M0 4 L3.5 0 L7 4Z" fill="#000"/></svg>
<div class="a" style="left:233px;top:78px;width:14px;height:441px;background:#d8d6d1;border-top:1px solid #fafafa;border-left:2px solid #fafafa;border-right:1px solid #555;border-bottom:1px solid #555"></div>
<div class="a" style="left:233px;top:519px;width:14px;height:102px;background:repeating-conic-gradient(#f6f6f6 0 25%,#e4e4e4 0 50%) 0 0/2px 2px"></div>
<div class="a" style="left:233px;top:620px;width:14px;height:15px;background:#dcdad5;border-top:1px solid #f4f4f4;border-left:1px solid #f4f4f4;border-right:1px solid #555;border-bottom:1px solid #555"></div>
<svg class="a" style="left:236px;top:626px" width="7" height="4" viewBox="0 0 7 4"><path d="M0 0 L3.5 4 L7 0Z" fill="#000"/></svg>
<div class="a" style="left:0;top:635px;width:923px;height:1px;background:#d4d4d4"></div>
<div id="list" class="a"></div>
<div id="lhdr" class="a"></div>
<div class="tx" style="left:257.5px;top:65.2px">Name</div>
<svg class="a" style="left:256.5px;top:79.5px" width="15" height="15" viewBox="0 0 15 15"><circle cx="4" cy="3.4" r="2.8" fill="#505050"/><rect x="1.3" y="3.6" width="5.4" height="1.1" fill="#e8e8e8"/><rect x="1.1" y="7.4" width="5.4" height="6.4" fill="#f2da7e" stroke="#8a7a40" stroke-width="0.9"/><path d="M6.2 10.4 L8.4 13.2 L14 7.8" fill="none" stroke="#2a9a42" stroke-width="2.1"/></svg>
<div class="tx" style="left:273px;top:80.50px">Administrator</div>
<svg class="a" style="left:256.5px;top:94.87px" width="15" height="15" viewBox="0 0 15 15"><circle cx="4" cy="3.4" r="2.8" fill="#505050"/><rect x="1.3" y="3.6" width="5.4" height="1.1" fill="#e8e8e8"/><rect x="1.1" y="7.4" width="5.4" height="6.4" fill="#f2da7e" stroke="#8a7a40" stroke-width="0.9"/><path d="M6.2 10.4 L8.4 13.2 L14 7.8" fill="none" stroke="#2a9a42" stroke-width="2.1"/></svg>
<div class="tx" style="left:273px;top:95.87px">Contributor</div>
<svg class="a" style="left:256.5px;top:110.24px" width="15" height="15" viewBox="0 0 15 15"><circle cx="4" cy="3.4" r="2.8" fill="#505050"/><rect x="1.3" y="3.6" width="5.4" height="1.1" fill="#e8e8e8"/><rect x="1.1" y="7.4" width="5.4" height="6.4" fill="#f2da7e" stroke="#8a7a40" stroke-width="0.9"/><path d="M6.2 10.4 L8.4 13.2 L14 7.8" fill="none" stroke="#2a9a42" stroke-width="2.1"/></svg>
<div class="tx" style="left:273px;top:111.24px">Power User</div>
<div class="lsel" style="top:125.11px;height:15.37px"></div>
<svg class="a" style="left:256.5px;top:125.61px" width="15" height="15" viewBox="0 0 15 15"><circle cx="4" cy="3.4" r="2.8" fill="#3f4670"/><rect x="1.3" y="3.6" width="5.4" height="1.1" fill="#c8cce0"/><rect x="1.1" y="7.4" width="5.4" height="6.4" fill="#cbbb86" stroke="#6e6038" stroke-width="0.9"/><path d="M6.2 10.4 L8.4 13.2 L14 7.8" fill="none" stroke="#2a9a42" stroke-width="2.1"/></svg>
<div class="tx" style="left:273px;top:126.61px">Reader</div>
<div class="lsel" style="top:140.48px;height:15.37px"></div>
<svg class="a" style="left:256.5px;top:140.98px" width="15" height="15" viewBox="0 0 15 15"><circle cx="4" cy="3.4" r="2.8" fill="#3f4670"/><rect x="1.3" y="3.6" width="5.4" height="1.1" fill="#c8cce0"/><rect x="1.1" y="7.4" width="5.4" height="6.4" fill="#cbbb86" stroke="#6e6038" stroke-width="0.9"/><path d="M6.2 10.4 L8.4 13.2 L14 7.8" fill="none" stroke="#2a9a42" stroke-width="2.1"/></svg>
<div class="tx" style="left:273px;top:141.98px">Role 6</div>
<svg class="a" style="left:256.5px;top:156.35px" width="15" height="15" viewBox="0 0 15 15"><circle cx="4" cy="3.4" r="2.8" fill="#505050"/><rect x="1.3" y="3.6" width="5.4" height="1.1" fill="#e8e8e8"/><rect x="1.1" y="7.4" width="5.4" height="6.4" fill="#f2da7e" stroke="#8a7a40" stroke-width="0.9"/><circle cx="9.8" cy="11" r="3.1" fill="#f6d8d0" stroke="#d8483a" stroke-width="1.5"/></svg>
<div class="tx" style="left:273px;top:157.35px">Role 7</div>
<svg class="a" style="left:256.5px;top:171.72px" width="15" height="15" viewBox="0 0 15 15"><circle cx="4" cy="3.4" r="2.8" fill="#505050"/><rect x="1.3" y="3.6" width="5.4" height="1.1" fill="#e8e8e8"/><rect x="1.1" y="7.4" width="5.4" height="6.4" fill="#f2da7e" stroke="#8a7a40" stroke-width="0.9"/><path d="M6.2 10.4 L8.4 13.2 L14 7.8" fill="none" stroke="#2a9a42" stroke-width="2.1"/></svg>
<div class="tx" style="left:273px;top:172.72px">Writer</div>
<div id="dlg" class="a"></div>
<div class="a" style="left:252px;top:189px;width:419px;height:17px;background:linear-gradient(to right,#0a246a,#a6caf0)"></div>
<div class="a" style="left:254px;top:191px;font-size:10.4px;line-height:13px;font-weight:bold;color:#fff;white-space:nowrap">Compare Roles</div>
<div class="a" style="left:655px;top:191px;width:14px;height:13px;background:#d6d3ce;border-top:1px solid #fff;border-left:1px solid #fff;border-right:1px solid #404040;border-bottom:1px solid #404040"></div>
<svg class="a" style="left:658px;top:194px" width="8" height="7" viewBox="0 0 8 7"><path d="M0.6 0.6 L7.4 6.4 M7.4 0.6 L0.6 6.4" stroke="#000" stroke-width="1.35"/></svg>
<div class="a" style="left:262px;top:217px;width:399px;height:215px;background:#fbfbfb;border-top:1px solid #fff;border-left:1px solid #fff"></div>
<div class="a" style="left:263px;top:218px;width:398px;height:1px;background:#c4c1bc"></div>
<div class="a" style="left:263px;top:219px;width:397px;height:18px;background:#d8d6d1;border-bottom:1px solid #a8a6a0"></div>
<div class="a" style="left:263px;top:237px;width:17px;height:62px;background:#eef0f3"></div>
<div class="a" style="left:280px;top:253px;width:381px;height:1px;background:#dcdcdc"></div>
<div class="a" style="left:280px;top:268px;width:381px;height:1px;background:#dcdcdc"></div>
<div class="a" style="left:280px;top:284px;width:381px;height:1px;background:#dcdcdc"></div>
<div class="a" style="left:280px;top:299px;width:381px;height:1px;background:#dcdcdc"></div>
<div class="a" style="left:405px;top:237px;width:1px;height:62px;background:#dcdcdc"></div>
<div class="a" style="left:532px;top:237px;width:1px;height:62px;background:#dcdcdc"></div>
<div class="dc" style="left:280px;top:222.5px;width:126px"><span>Permission</span></div>
<div class="dc" style="left:405px;top:222.5px;width:126px"><span>Reader</span></div>
<div class="dc" style="left:532px;top:222.5px;width:128px"><span>Role 6</span></div>
<div class="dx" style="left:282.5px;top:239.70px">Read</div>
<div class="dx" style="left:282.5px;top:255.15px">Execute search</div>
<div class="dx" style="left:282.5px;top:270.60px">Delete files in documents</div>
<div class="dx" style="left:282.5px;top:286.05px">Delete document</div>
<svg class="a" style="left:462.5px;top:241px" width="12" height="10" viewBox="0 0 12 10"><path d="M1 5.5 L4 8.8 L10.5 1.5" fill="none" stroke="#6cae3c" stroke-width="2.4" stroke-linejoin="round"/></svg>
<svg class="a" style="left:462.5px;top:256px" width="12" height="10" viewBox="0 0 12 10"><path d="M1 5.5 L4 8.8 L10.5 1.5" fill="none" stroke="#6cae3c" stroke-width="2.4" stroke-linejoin="round"/></svg>
<svg class="a" style="left:589.5px;top:271.5px" width="12" height="10" viewBox="0 0 12 10"><path d="M1 5.5 L4 8.8 L10.5 1.5" fill="none" stroke="#6cae3c" stroke-width="2.4" stroke-linejoin="round"/></svg>
<svg class="a" style="left:589.5px;top:286.5px" width="12" height="10" viewBox="0 0 12 10"><path d="M1 5.5 L4 8.8 L10.5 1.5" fill="none" stroke="#6cae3c" stroke-width="2.4" stroke-linejoin="round"/></svg>
<div class="a" style="left:593px;top:434px;width:68px;height:21px;border:1px solid #000;background:#d6d3ce"></div>
<div class="a" style="left:594px;top:435px;width:66px;height:19px;border-top:1px solid #fff;border-left:1px solid #fff;border-right:1px solid #404040;border-bottom:1px solid #404040"></div>
<div class="dc" style="left:593px;top:438.5px;width:68px"><span>OK</span></div>
<svg class="a" style="left:422px;top:303px" width="12" height="20" viewBox="0 0 12 20"><path d="M0.6 0.6 L0.6 15 L3.8 11.8 L7 18.6 L9.2 17.6 L6.4 10.9 L10.4 10.6 Z" fill="#fff" stroke="#111" stroke-width="1" stroke-linejoin="miter"/></svg>
</body></html>
